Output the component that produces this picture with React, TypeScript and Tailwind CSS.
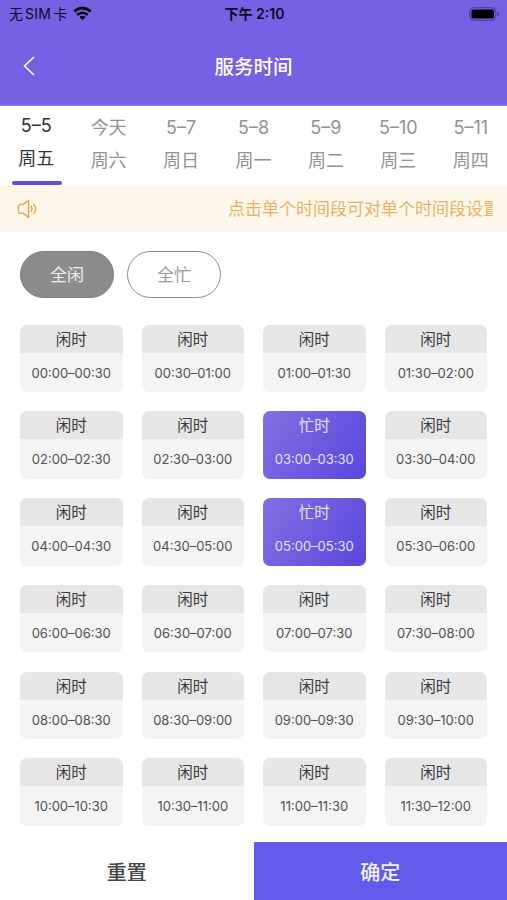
import { useState } from "react";

const days = [
  { date: "5–5", week: "周五" },
  { date: "今天", week: "周六" },
  { date: "5–7", week: "周日" },
  { date: "5–8", week: "周一" },
  { date: "5–9", week: "周二" },
  { date: "5–10", week: "周三" },
  { date: "5–11", week: "周四" },
];

const formatTime = (index: number) => {
  const hour = String(Math.floor(index / 2)).padStart(2, "0");
  return `${hour}:${index % 2 ? "30" : "00"}`;
};

const slots = Array.from({ length: 24 }, (_, i) => `${formatTime(i)}–${formatTime(i + 1)}`);

const StatusBar = () => (
  <div className="grid h-7 grid-cols-3 items-center pr-[7px] pl-[9px] text-[14px] leading-7 text-[#0d0a1e]">
    <div className="flex items-center gap-[6px]">
      <span className="flex gap-[2px]">
        <span>无</span>
        <span className="tracking-[0.3px]">SIM</span>
        <span>卡</span>
      </span>
      <svg className="-mt-[2px] h-[14px] w-[19px]" viewBox="0 0 19 14" fill="none" stroke="#000" strokeWidth="2.7">
        <path d="M1.3 5.5a11.6 11.6 0 0 1 16.4 0" />
        <path d="M4.3 8.9a7.4 7.4 0 0 1 10.4 0" />
        <path d="M9.5 14 6.5 11a4.2 4.2 0 0 1 6 0z" fill="#000" stroke="none" />
      </svg>
    </div>
    <span className="text-center font-semibold whitespace-nowrap">下午 2:10</span>
    <svg className="-mt-px h-[14px] w-[31px] justify-self-end" viewBox="0 0 31 14">
      <rect x="0.75" y="0.75" width="26" height="12.5" rx="4" fill="none" stroke="#000" strokeOpacity="0.4" />
      <rect x="2.4" y="2.4" width="22.6" height="9.2" rx="2.2" fill="#000" />
      <path d="M28.4 4.8c1.9.7 1.9 3.7 0 4.4z" fill="#000" fillOpacity="0.45" />
    </svg>
  </div>
);

const SlotCard = ({ time, busy, onClick }: { time: string; busy: boolean; onClick: () => void }) => (
  <button
    onClick={onClick}
    className={`flex h-[67.5px] flex-col overflow-hidden rounded-[7px] text-center ${
      busy ? "bg-linear-[120deg] from-[#8170e2] to-[#5b46dd] text-[#e6e1fc]" : "bg-[#f4f4f4] text-[#505050]"
    }`}
  >
    <span className={`h-7 w-full pt-px text-[15.5px] leading-[28px] ${busy ? "" : "bg-[#e6e6e6] text-[#3c3c3c]"}`}>
      {busy ? "忙时" : "闲时"}
    </span>
    <span className="w-full text-[13px] leading-[40px] whitespace-nowrap">{time}</span>
  </button>
);

const App = () => {
  const [activeDay, setActiveDay] = useState(0);
  const [busySlots, setBusySlots] = useState([6, 10]);

  const toggleSlot = (index: number) => {
    setBusySlots((prev) => (prev.includes(index) ? prev.filter((i) => i !== index) : [...prev, index]));
  };

  return (
    <div className="flex h-[900px] w-[507px] flex-col overflow-hidden bg-white font-['Inter','Noto_Sans_CJK_SC',sans-serif]">
      <header className="h-[106px] shrink-0 border-b border-[#8b7aec] bg-[#7660e4]">
        <StatusBar />
        <div className="grid h-[76px] grid-cols-3 items-center px-[23px]">
          <svg className="-mt-px h-5 w-3" viewBox="0 0 12 20" fill="none" stroke="#fff" strokeWidth="1.6">
            <path d="M11 1 1.5 10 11 19" />
          </svg>
          <h1 className="pt-[3px] text-center text-[19.5px] font-medium text-white">服务时间</h1>
        </div>
      </header>

      <nav className="grid h-20 shrink-0 grid-cols-7">
        {days.map((day, index) => (
          <button
            key={day.date}
            onClick={() => setActiveDay(index)}
            className={`relative flex flex-col items-center text-[18px] leading-[33px] ${
              index === activeDay ? "pt-[3px] text-[#333]" : "pt-[5px] text-[#929292]"
            }`}
          >
            <span>{day.date}</span>
            <span>{day.week}</span>
            {index === activeDay && (
              <span className="absolute bottom-[1px] left-3 h-1 w-[50px] rounded-full bg-[#6450d8]" />
            )}
          </button>
        ))}
      </nav>

      <div className="flex h-[46px] shrink-0 items-center bg-[#fcf6eb] pr-[14px] pl-[17px] text-[#e9b25f]">
        <svg className="-mt-px h-5 w-5" viewBox="0 0 20 20" fill="none" stroke="#e8a94c" strokeWidth="1.5" strokeLinecap="round" strokeLinejoin="round">
          <path d="M11.6 1.4v17L6 14.2H3c-1 0-1.3-.4-1.3-1.2l-.5-3.1.5-3.1c0-.8.3-1.2 1.3-1.2h3z" />
          <path d="M14.2 7.4c1 1.5 1 3.5 0 5" />
          <path d="M16.8 5.2c2.3 2.7 2.3 6.7 0 9.4" />
        </svg>
        <p className="ml-auto w-[265px] overflow-hidden pt-[2px] text-[17px] whitespace-nowrap">
          点击单个时间段可对单个时间段设置
        </p>
      </div>

      <main className="flex-1 px-5 pt-[19px]">
        <div className="flex gap-[13px] text-[17px]">
          <button
            onClick={() => setBusySlots([])}
            className="h-[47px] w-[94px] rounded-full border border-[#7e7e7e] bg-[#8c8c8c] pt-[2px] text-[#f0f0f0]"
          >
            全闲
          </button>
          <button
            onClick={() => setBusySlots(slots.map((_, i) => i))}
            className="h-[47px] w-[94px] rounded-full border-[1.5px] border-[#8c8c8c] pt-[2px] text-[#9b9b9b]"
          >
            全忙
          </button>
        </div>
        <div className="mt-[26.5px] grid grid-cols-4 gap-x-[19px] gap-y-[19.3px]">
          {slots.map((time, index) => (
            <SlotCard key={time} time={time} busy={busySlots.includes(index)} onClick={() => toggleSlot(index)} />
          ))}
        </div>
      </main>

      <footer className="grid h-[58px] shrink-0 grid-cols-2 text-[20px]">
        <button className="pt-1 font-medium text-[#444]">重置</button>
        <button className="bg-[#615aea] pt-1 font-medium text-[#f3f1ff]">确定</button>
      </footer>
    </div>
  );
};

export default App;
